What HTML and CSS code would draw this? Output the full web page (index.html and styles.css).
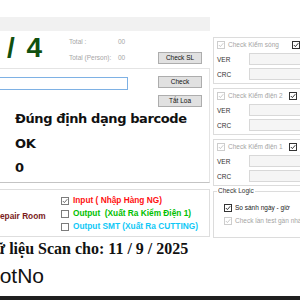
FILE: index.html
```html
<!DOCTYPE html>
<html>
<head>
<meta charset="utf-8">
<link rel="stylesheet" href="styles.css">
</head>
<body>
<div class="screen">
  <div class="app">
    <div class="left">
      <div class="topspace"></div>
      <div class="graybar"></div>
      <div class="stats">
        <div class="big">/ 4</div>
        <div class="totals">
          <span>Total :</span><span>00</span>
          <span>Total (Person):</span><span>00</span>
        </div>
        <button class="btn sl">Check SL</button>
      </div>
      <div class="mainbox">
        <div class="inrow">
          <div class="barcode"></div>
          <div class="btncol">
            <button class="btn">Check</button>
            <button class="btn">Tắt Loa</button>
          </div>
        </div>
        <div class="msgs">
          <div>Đúng định dạng barcode</div>
          <div>OK</div>
          <div>0</div>
        </div>
      </div>
      <div class="repair">
        <div class="rlabel">Repair Room</div>
        <div class="ropts">
          <div class="opt red"><span class="cb on gray"><svg viewBox="0 0 6 6"><path d="M0.8 3 L2.4 4.6 L5.3 1.2"/></svg></span>Input ( Nhập Hàng NG)</div>
          <div class="opt green"><span class="cb gray"></span>Output&nbsp; (Xuất Ra Kiểm Điện 1)</div>
          <div class="opt cyan"><span class="cb gray"></span>Output SMT (Xuất Ra CUTTING)</div>
        </div>
      </div>
      <div class="scan">Dữ liệu Scan cho: 11 / 9 / 2025</div>
      <div class="lot">LotNo</div>
    </div>
    <div class="right">
      <div class="grp">
        <div class="gtitle">
          <span class="cb dis"><svg viewBox="0 0 6 6"><path d="M0.8 3 L2.4 4.6 L5.3 1.2"/></svg></span>
          <span class="gtext w1">Check Kiểm sóng</span>
          <span class="cb"><svg viewBox="0 0 6 6"><path d="M0.8 3 L2.4 4.6 L5.3 1.2"/></svg></span>
        </div>
        <div class="fld"><span class="flabel">VER</span><span class="tbox"></span></div>
        <div class="fld second"><span class="flabel">CRC</span><span class="tbox"></span></div>
      </div>
      <div class="grp">
        <div class="gtitle">
          <span class="cb dis"><svg viewBox="0 0 6 6"><path d="M0.8 3 L2.4 4.6 L5.3 1.2"/></svg></span>
          <span class="gtext w2">Check Kiểm điện 2</span>
          <span class="cb"><svg viewBox="0 0 6 6"><path d="M0.8 3 L2.4 4.6 L5.3 1.2"/></svg></span>
        </div>
        <div class="fld"><span class="flabel">VER</span><span class="tbox"></span></div>
        <div class="fld second"><span class="flabel">CRC</span><span class="tbox"></span></div>
      </div>
      <div class="grp g3">
        <div class="gtitle">
          <span class="cb dis"><svg viewBox="0 0 6 6"><path d="M0.8 3 L2.4 4.6 L5.3 1.2"/></svg></span>
          <span class="gtext w2">Check Kiểm điện 1</span>
          <span class="cb"><svg viewBox="0 0 6 6"><path d="M0.8 3 L2.4 4.6 L5.3 1.2"/></svg></span>
        </div>
        <div class="fld"><span class="flabel">VER</span><span class="tbox"></span></div>
        <div class="fld second"><span class="flabel">CRC</span><span class="tbox"></span></div>
      </div>
      <fieldset class="logic">
        <legend>Check Logic</legend>
        <div class="lrow"><span class="cb"><svg viewBox="0 0 6 6"><path d="M0.8 3 L2.4 4.6 L5.3 1.2"/></svg></span>So sánh ngày - giờ</div>
        <div class="lrow off"><span class="cb dis"><svg viewBox="0 0 6 6"><path d="M0.8 3 L2.4 4.6 L5.3 1.2"/></svg></span>Check lần test gần nhất</div>
      </fieldset>
    </div>
  </div>
  <div class="bottombar"></div>
</div>
</body>
</html>
```
FILE: styles.css
```css
html, body {
  margin: 0;
  padding: 0;
  background: #ffffff;
  overflow: hidden;
}
.screen {
  width: 300px;
  height: 300px;
  display: flex;
  flex-direction: column;
  overflow: hidden;
  font-family: "Liberation Sans", Arial, sans-serif;
}
.app {
  flex: 1;
  display: flex;
  overflow: hidden;
}
.left {
  width: 210px;
  flex: none;
}
.topspace { height: 17px; }
.graybar { height: 14px; background: #f1f1f1; }
.stats {
  display: flex;
  height: 37px;
}
.big {
  width: 69px;
  box-sizing: border-box;
  padding-left: 7px;
  padding-top: 1px;
  font: bold 28px/32px "Liberation Sans", Arial, sans-serif;
  color: #10500f;
  word-spacing: 4px;
  white-space: nowrap;
}
.totals {
  width: 89px;
  display: grid;
  grid-template-columns: 49px auto;
  row-gap: 6px;
  align-content: start;
  padding-top: 6px;
  font-size: 6.5px;
  line-height: 10px;
  color: #a6a6a6;
  white-space: nowrap;
}
.btn {
  display: block;
  width: 44px;
  height: 12px;
  padding: 0;
  margin: 0;
  box-sizing: border-box;
  background: #e1e1e1;
  border: 1px solid #adadad;
  border-radius: 0;
  font: 6.5px/10px "Liberation Sans", Arial, sans-serif;
  color: #111;
}
.sl { margin-top: 21px; }
.mainbox {
  height: 115px;
  box-sizing: border-box;
  border-top: 1px solid #e4e4e4;
  border-right: 1px solid #e4e4e4;
  border-bottom: 1px solid #c4c4c4;
}
.inrow {
  display: flex;
  padding-top: 7px;
}
.barcode {
  width: 129px;
  height: 13px;
  margin-left: -1px;
  margin-top: 1px;
  box-sizing: border-box;
  border: 1px solid #7eb1e4;
  background: #fff;
}
.btncol {
  margin-left: 30px;
  display: flex;
  flex-direction: column;
  gap: 7px;
}
.msgs {
  padding-left: 15px;
  font: bold 13px/24.5px "DejaVu Sans", Verdana, sans-serif;
  letter-spacing: -0.4px;
  color: #111;
  white-space: nowrap;
}
.repair {
  margin-top: 6px;
  height: 48px;
  box-sizing: border-box;
  border-top: 1px solid #dedede;
  border-right: 1px solid #dedede;
  border-bottom: 1px solid #dedede;
  display: flex;
}
.rlabel {
  width: 67px;
  margin-left: -6px;
  flex: none;
  align-self: center;
  padding-top: 5px;
  font: bold 8.3px/10px "Liberation Sans", Arial, sans-serif;
  color: #7a1b1b;
  white-space: nowrap;
}
.ropts {
  padding-top: 4px;
}
.opt {
  display: flex;
  align-items: center;
  height: 13px;
  font: bold 8.3px/13px "Liberation Sans", Arial, sans-serif;
  white-space: nowrap;
}
.opt .cb { margin-right: 4px; }
.red { color: #ff1010; }
.green { color: #00c000; }
.cyan { color: #10c8f6; }
.cb {
  display: inline-flex;
  align-items: center;
  justify-content: center;
  flex: none;
  width: 8px;
  height: 8px;
  box-sizing: border-box;
  border: 1px solid #333;
  background: #fff;
}
.cb svg {
  display: block;
  width: 6px;
  height: 6px;
}
.cb path {
  fill: none;
  stroke: #222;
  stroke-width: 0.9;
}
.cb.gray { border-color: #7c7c7c; }
.cb.gray path { stroke: #606060; }
.cb.dis { border-color: #cdcdcd; }
.cb.dis path { stroke: #c4c4c4; }
.scan {
  margin-top: 3px;
  margin-left: -16px;
  font: bold 16px/18px "Liberation Serif", "Times New Roman", serif;
  color: #111;
  white-space: nowrap;
}
.lot {
  margin-top: 6px;
  margin-left: -12px;
  font: 21px/24px "Liberation Sans", Arial, sans-serif;
  color: #111;
  white-space: nowrap;
}
.right {
  margin-left: 3px;
  width: 120px;
  flex: none;
  padding-top: 37px;
}
.grp {
  height: 47px;
  box-sizing: border-box;
  border: 1px solid #dcdcdc;
  margin-bottom: 4px;
  padding: 1px 0 0 3px;
}
.g3 { margin-bottom: 1px; }
.gtitle {
  display: flex;
  align-items: center;
  height: 12px;
}
.gtitle .cb.dis { margin-right: 3px; }
.gtext {
  font-size: 6.5px;
  line-height: 12px;
  color: #a4a4a4;
  white-space: nowrap;
}
.w1 { width: 64px; }
.w2 { width: 61px; }
.fld {
  display: flex;
  align-items: center;
  height: 12px;
  margin-top: 2px;
}
.fld.second { margin-top: 3px; }
.flabel {
  width: 32px;
  font-size: 6.5px;
  color: #333;
}
.tbox {
  width: 70px;
  height: 12px;
  box-sizing: border-box;
  background: #f5f5f5;
  border: 1px solid #d8d8d8;
}
.logic {
  margin: 0;
  width: 120px;
  box-sizing: border-box;
  border: 1px solid #dcdcdc;
  padding: 6px 0 10px 10px;
  min-inline-size: 0;
}
.logic legend {
  margin-left: -7px;
  padding: 0 1px;
  font-size: 6.5px;
  line-height: 8px;
  color: #333;
}
.lrow {
  display: flex;
  align-items: center;
  height: 13px;
  font-size: 6.5px;
  color: #222;
  white-space: nowrap;
}
.lrow .cb { margin-right: 3px; }
.lrow.off { color: #a4a4a4; }
.bottombar {
  height: 4px;
  background: #202020;
  flex: none;
}
```
